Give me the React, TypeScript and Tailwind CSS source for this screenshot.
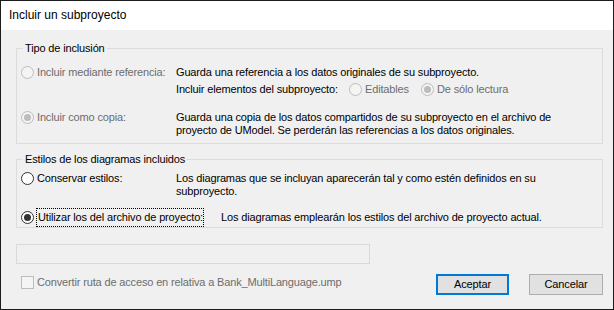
import React from 'react';

const sans = "font-['Liberation_Sans',Arial,sans-serif]";

function Radio({ checked = false, disabled = false }: { checked?: boolean; disabled?: boolean }) {
  return (
    <span
      className={
        disabled
          ? 'w-[13px] h-[13px] shrink-0 rounded-full border border-[#bcbcbc] bg-[#f4f4f4] flex items-center justify-center'
          : 'w-[13px] h-[13px] shrink-0 rounded-full border border-[#333333] bg-white flex items-center justify-center'
      }
    >
      {checked && (
        <span className={disabled ? 'w-[7px] h-[7px] rounded-full bg-[#bcbcbc]' : 'w-[7px] h-[7px] rounded-full bg-[#333333]'} />
      )}
    </span>
  );
}

export default function App() {
  return (
    <div className={`w-[614px] h-[310px] border border-[#1c1c1c] flex flex-col text-[11px] leading-[13px] tracking-[-0.15px] text-black ${sans}`}>
      {/* title bar */}
      <div className="h-[29px] bg-white flex items-center pl-[8px] text-[12px] tracking-normal">Incluir un subproyecto</div>

      <div className="flex-1 bg-[#f0f0f0] pl-[15px] pr-[10px] pt-[12px] flex flex-col">
        {/* Tipo de inclusión */}
        <fieldset className="border border-[#dcdcdc] h-[102px]">
          <legend className="ml-[6px] px-[2px]">Tipo de inclusión</legend>
          <div className="pl-[4px] pt-[11px]">
            <div className="flex">
              <div className="w-[155px] flex items-start gap-[3px] text-[#6d6d6d]">
                <Radio disabled />
                <span>Incluir mediante referencia:</span>
              </div>
              <div className="flex flex-col gap-[4px]">
                <span>Guarda una referencia a los datos originales de su subproyecto.</span>
                <div className="flex items-center">
                  <span className="w-[173px]">Incluir elementos del subproyecto:</span>
                  <div className="w-[72px] flex items-center gap-[3px] text-[#6d6d6d]">
                    <Radio disabled />
                    <span>Editables</span>
                  </div>
                  <div className="flex items-center gap-[3px] text-[#6d6d6d]">
                    <Radio disabled checked />
                    <span>De sólo lectura</span>
                  </div>
                </div>
              </div>
            </div>

            <div className="flex mt-[15px]">
              <div className="w-[155px] flex items-start gap-[3px] text-[#6d6d6d]">
                <Radio disabled checked />
                <span>Incluir como copia:</span>
              </div>
              <div className="flex flex-col">
                <span>Guarda una copia de los datos compartidos de su subproyecto en el archivo de</span>
                <span>proyecto de UModel. Se perderán las referencias a los datos originales.</span>
              </div>
            </div>
          </div>
        </fieldset>

        {/* Estilos de los diagramas incluidos */}
        <fieldset className="border border-[#dcdcdc] h-[75px] mt-[9px]">
          <legend className="ml-[6px] px-[2px]">Estilos de los diagramas incluidos</legend>
          <div className="pl-[4px] pt-[6px]">
            <div className="flex">
              <div className="w-[155px] flex items-start gap-[3px]">
                <Radio />
                <span>Conservar estilos:</span>
              </div>
              <div className="flex flex-col">
                <span>Los diagramas que se incluyan aparecerán tal y como estén definidos en su</span>
                <span>subproyecto.</span>
              </div>
            </div>

            <div className="flex items-center mt-[10px]">
              <Radio checked />
              <span className="ml-[2px] w-[168px] px-[1px] py-[2px] border border-dotted border-black whitespace-nowrap">
                Utilizar los del archivo de proyecto:
              </span>
              <span className="ml-[17px]">Los diagramas emplearán los estilos del archivo de proyecto actual.</span>
            </div>
          </div>
        </fieldset>

        {/* path field */}
        <div className="mt-[16px] w-[354px] h-[20px] border border-[#d9d9d9] bg-[#f0f0f0]" />

        <div className="flex mt-[10px]">
          <div className="flex items-center gap-[3px] pl-[5px] pt-[1px] h-[13px] mt-[1px] text-[#6d6d6d]">
            <span className="w-[13px] h-[13px] border border-[#bcbcbc] bg-[#f4f4f4]" />
            <span>Convertir ruta de acceso en relativa a Bank_MultiLanguage.ump</span>
          </div>
          <div className="ml-auto flex gap-[20px]">
            <button className="w-[73px] h-[21px] border-2 border-[#0078d7] bg-[#e1e1e1] flex items-center justify-center">
              Aceptar
            </button>
            <button className="w-[74px] h-[21px] border border-[#adadad] bg-[#e1e1e1] flex items-center justify-center">
              Cancelar
            </button>
          </div>
        </div>
      </div>
    </div>
  );
}
